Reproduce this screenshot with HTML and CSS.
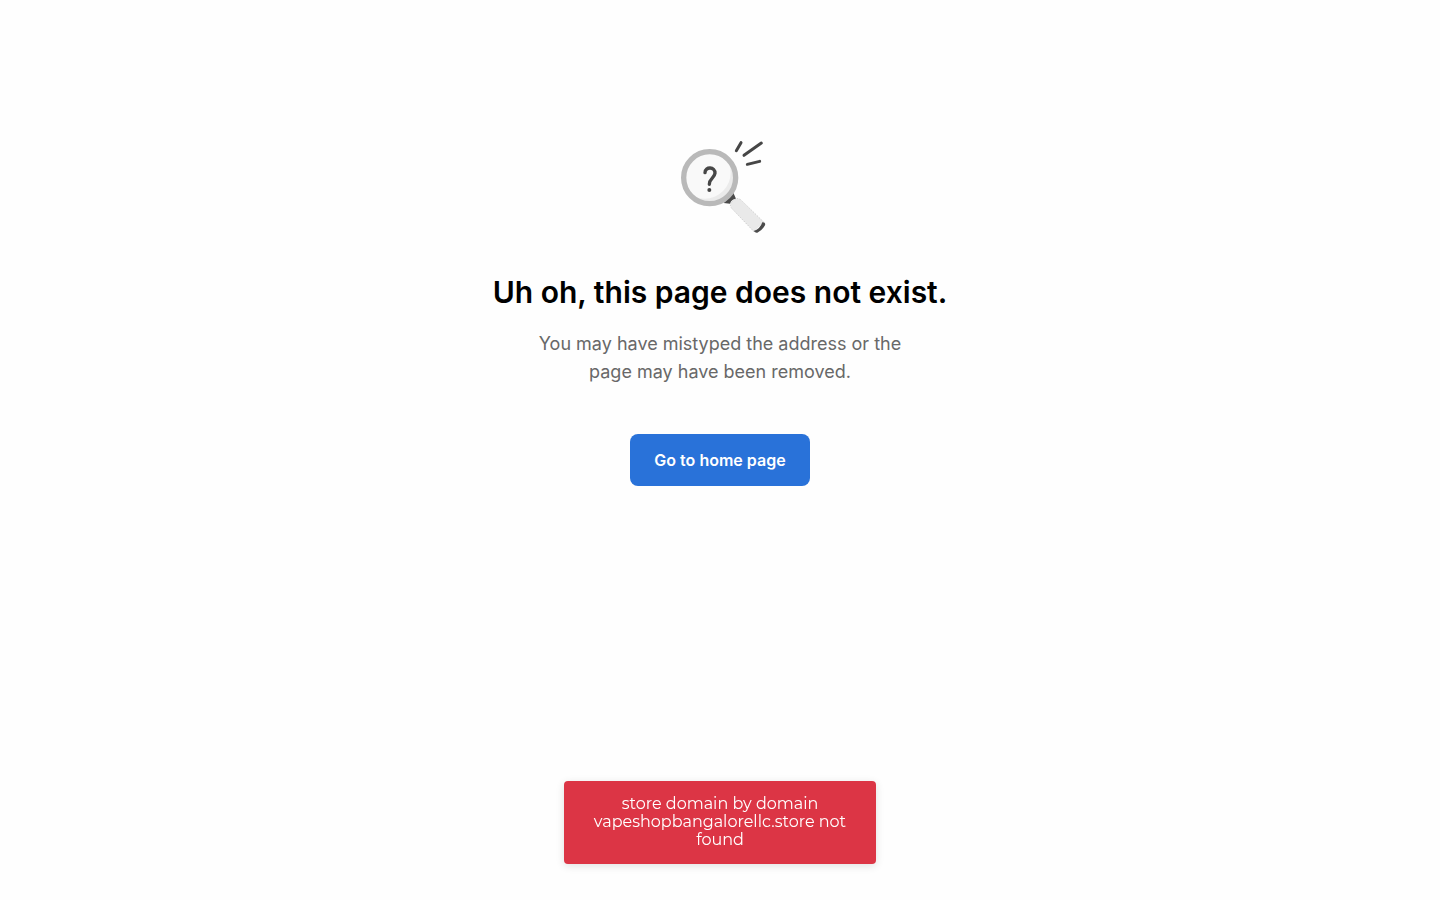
FILE: index.html
```html
<!DOCTYPE html>
<html lang="en">
<head>
  <meta charset="UTF-8">
  <meta name="viewport" content="width=device-width, initial-scale=1.0">
  <title>Page not found</title>
  <link rel="stylesheet" href="styles.css">
</head>
<body>
  <main class="not-found">
    <svg class="illustration" viewBox="0 0 330 345" aria-hidden="true">
      <defs>
        <clipPath id="lens">
          <circle cx="120" cy="143" r="74"/>
        </clipPath>
      </defs>
      <!-- lens -->
      <circle cx="120" cy="143" r="74" fill="#ebebeb"/>
      <circle cx="104" cy="128" r="78" fill="#f9f9f9" clip-path="url(#lens)"/>
      <path d="M161 219L190 188L198 206Q184 208 180 221Z" fill="#4b4b4b"/>
      <circle cx="119" cy="143" r="78" fill="none" stroke="#b9b9b9" stroke-width="16"/>
      <path d="M105 128C105 109 136 109 135 130C133 145 118 145 118 163" fill="none" stroke="#464646" stroke-width="10" stroke-linecap="round"/>
      <circle cx="118" cy="180" r="6" fill="#464646"/>
      <!-- handle -->
      <path d="M184 234Q177 222 188 213Q200 201 212 209L281 276L252 305Z" fill="#e9e9e9"/>
      <path d="M252 305L184 234Q177 222 188 213Q200 201 212 209L281 276" fill="none" stroke="#bdbdbd" stroke-width="2" stroke-dasharray="4 4"/>
      <path d="M251 303Q270 298 277 277Q288 276 285 286Q277 301 262 308Q257 310 251 303Z" fill="#4b4b4b"/>
      <!-- spark lines -->
      <path d="M199 62L213 38M222 76L274 39M232 103L269 94" fill="none" stroke="#464646" stroke-width="9" stroke-linecap="round"/>
    </svg>
    <h1>Uh oh, this page does not exist.</h1>
    <p class="message">You may have mistyped the address or the page may have been removed.</p>
    <button type="button" class="home-button">Go to home page</button>
  </main>
  <div class="toast" role="alert">store domain by domain vapeshopbangalorellc.store not found</div>
</body>
</html>
```
FILE: styles.css
```css
body {
  margin: 0;
  min-height: 100vh;
  background: #fefefe;
  font-family: Inter, "Liberation Sans", sans-serif;
}
.not-found {
  display: flex;
  flex-direction: column;
  align-items: center;
  padding: 130px 16px 0;
  text-align: center;
}
.illustration {
  width: 110px;
  height: 115px;
  margin-left: 10px;
}
h1 {
  margin: 27px 0 18px;
  font-size: 30px;
  font-weight: 600;
  line-height: 40px;
  color: #000;
}
.message {
  max-width: 380px;
  margin: 0 0 48px;
  font-size: 18px;
  line-height: 28px;
  color: #686868;
}
.home-button {
  padding: 16px 24px;
  border: none;
  border-radius: 8px;
  background: #2972d9;
  color: #fff;
  font-family: inherit;
  font-size: 16px;
  font-weight: 600;
  line-height: 20px;
  cursor: pointer;
}
.home-button:hover {
  background: #2264c2;
}
.toast {
  position: fixed;
  bottom: 36px;
  left: 50%;
  transform: translateX(-50%);
  box-sizing: border-box;
  width: 312px;
  padding: 14px 24px 15px;
  border-radius: 4px;
  background: #dc3545;
  box-shadow: 0 2px 8px rgba(0, 0, 0, 0.12);
  color: #fff;
  font-family: Montserrat, Inter, sans-serif;
  font-size: 16px;
  line-height: 18px;
  text-align: center;
}
```
